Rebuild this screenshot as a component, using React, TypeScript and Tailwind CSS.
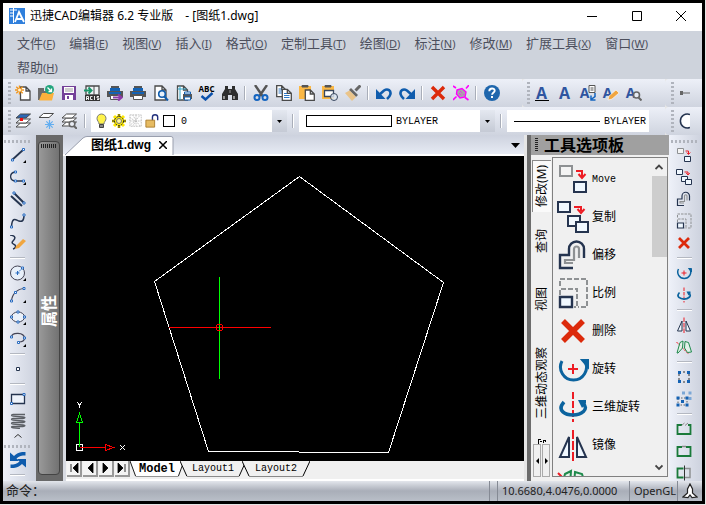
import type { ReactNode } from "react";

const NAVY = "#25344f";
const BLUE = "#0f5cad";

function Svg({ box = 16, className = "size-4", children }: { box?: number; className?: string; children: ReactNode }) {
  return (
    <svg viewBox={`0 0 ${box} ${box}`} className={`block shrink-0 ${className}`} fill="none" aria-hidden="true">
      {children}
    </svg>
  );
}

/* ---------- standard toolbar icons (16 x 16) ---------- */

const Page = ({ x = 0, y = 0, w = 10, h = 13 }: { x?: number; y?: number; w?: number; h?: number }) => (
  <path d={`M${x} ${y}h${w - 4}l4 4v${h - 4}h${-w}zM${x + w - 4} ${y}v4h4`} fill="#fff" stroke="#4a4a4a" strokeWidth="1.3" />
);

const NewIcon = () => (
  <Svg>
    <Page x={5.5} y={2} w={9.5} h={13} />
    <path d="M0 5h9M4.500 .5v9M1.300 1.800l6.400 6.400M7.700 1.800L1.300 8.200" stroke="#f0961e" strokeWidth="1.400" />
    <circle cx="4.500" cy="5" r="1.500" fill="#fff4d8" />
  </Svg>
);
const OpenIcon = () => (
  <Svg>
    <path d="M0 15V3h6v3h5v9z" fill="#6b6b6b" />
    <path d="M1 15.500L4 8h12l-2 7.500z" fill="#fbb13c" />
    <circle cx="11.500" cy="4.500" r="4.500" fill="#22a57e" />
    <path d="M9.500 2.500l4 4M13.500 3.500v3h-3" stroke="#fff" strokeWidth="1.300" />
  </Svg>
);
const SaveIcon = () => (
  <Svg>
    <path d="M1 1h14v14H1z" fill="#744199" />
    <path d="M3 2h10v6H3zM4 10h8v5H4z" fill="#fff" />
    <path d="M4 4h8M4 6h8" stroke="#9d9d9d" />
    <path d="M6 11h2v3H6z" fill="#744199" />
  </Svg>
);
const AcisIcon = () => (
  <Svg>
    <path d="M2 1h13v9H2z" fill="#eef2f4" stroke="#4a4a4a" strokeWidth="1.300" />
    <path d="M10 1v9" stroke="#4a4a4a" />
    <path d="M0 5.500h7M4.500 2.500l3 3-3 3" stroke="#16976a" strokeWidth="2" />
    <path d="M1 10h15v6H1z" fill="#333" />
    <path d="M2.500 15v-3.500h2V15m-2-1.500h2M8.500 11.500h-2v3h2M10.500 11v4M15 11.500h-2v1.500h2v1.500h-2" stroke="#fff" strokeWidth=".9" />
  </Svg>
);
const printer = (
  <>
    <path d="M4 1h8v3H4z" fill="#555" />
    <path d="M3 3h10v3H3z" fill="#1462b4" />
    <path d="M0 6h16v6H0z" fill="#555" />
    <path d="M2 7h12v2H2z" fill="#1462b4" />
    <path d="M3.500 10.500h9v4h-9z" fill="#fff" stroke="#555" />
  </>
);
const PrintExportIcon = () => (
  <Svg>
    {printer}
    <path d="M6 12.500h7M11 9.500l3.500 3-3.500 3" stroke="#8c3aa8" strokeWidth="2.200" />
  </Svg>
);
const PrintIcon = () => <Svg>{printer}</Svg>;
const PreviewIcon = () => (
  <Svg>
    <Page x={2} y={1} w={11} h={14} />
    <circle cx="9" cy="9" r="3.300" fill="#e8f1fb" stroke={BLUE} strokeWidth="1.600" />
    <path d="M11.300 11.500L15 15.500" stroke={BLUE} strokeWidth="2" />
  </Svg>
);
const PageSetupIcon = () => (
  <Svg>
    <Page x={1.5} y={1} w={10} h={14} />
    <path d="M4 1v14M1.500 4h9" stroke="#33a3c7" />
    <path d="M7 9h9v5H7z" fill="#555" />
    <path d="M8.500 7h6v2h-6zM8.500 12h6v3h-6z" fill="#fff" stroke="#1462b4" />
  </Svg>
);
const SpellIcon = () => (
  <span className="flex flex-col items-center">
    <span className="font-['Open_Sans',sans-serif] text-[8px] leading-[7px] font-bold text-black">ABC</span>
    <svg viewBox="0 0 14 9" className="block h-[9px] w-3.5" fill="none" aria-hidden="true">
      <path d="M1.500 4l4 3.500L12.500 1" stroke="#0b51ab" strokeWidth="2.400" />
    </svg>
  </span>
);
const FindIcon = () => (
  <Svg>
    <path d="M3 1h3v3h4V1h3v3l3 5v6h-6v-5H6v5H0V9l3-5z" fill="#2e2e2e" />
    <path d="M2 11v3M12 11v3" stroke="#fff" />
    <path d="M8 5v3" stroke="#999" />
  </Svg>
);
const CutIcon = () => (
  <Svg>
    <path d="M2 0l7.500 11M14 0L6.500 11" stroke="#555" strokeWidth="2.400" />
    <circle cx="4" cy="12.500" r="2.500" stroke="#1565c0" strokeWidth="2" />
    <circle cx="12" cy="12.500" r="2.500" stroke="#1565c0" strokeWidth="2" />
  </Svg>
);
const CopyDocIcon = () => (
  <Svg>
    <Page x={0.7} y={0.7} w={9} h={11} />
    <path d="M2.500 4h3M2.500 6h4M2.500 8h4" stroke="#2d77c4" />
    <Page x={6.3} y={4.3} w={9} h={11} />
    <path d="M8 8.500h3M8 10.500h5.500M8 12.500h5.500" stroke="#2d77c4" />
  </Svg>
);
const PasteIcon = () => (
  <Svg>
    <path d="M0 1h12v13H0z" fill="#fbb845" />
    <path d="M3 2V.500h6V2z" fill="#555" stroke="#555" />
    <Page x={6.3} y={5} w={9} h={10.3} />
  </Svg>
);
const PasteSpecialIcon = () => (
  <Svg>
    <path d="M0 1h12v13H0z" fill="#fbb845" />
    <path d="M3 2V.500h6V2z" fill="#555" stroke="#555" />
    <path d="M2.500 5.500h9v6h-9z" fill="#fff" stroke="#39475e" strokeWidth="1.300" />
    <circle cx="12" cy="12" r="3.500" fill="#dfe8f4" fillOpacity=".8" stroke="#39475e" />
  </Svg>
);
const BrushIcon = () => (
  <Svg>
    <path d="M15.500 .5l-5 5" stroke="#666" strokeWidth="3" />
    <path d="M6 3l7 7-2 2-7-7z" fill="#666" />
    <path d="M4.500 5.500l6.500 6.500-4 4L0 8z" fill="#eac48a" />
  </Svg>
);
const UndoIcon = ({ flip = false }: { flip?: boolean }) => (
  <Svg className={flip ? "size-4 -scale-x-100" : "size-4"}>
    <path d="M3 10l5-4.500c4-2.500 7.300.3 6.300 4-.5 2-1.800 3-3.300 4.500" stroke={BLUE} strokeWidth="2.600" />
    <path d="M0 4v10h9.500z" fill={BLUE} />
  </Svg>
);
const ExplodeIcon = () => (
  <Svg>
    <path d="M4 5l5-1.500 4 3.500-1 5-5 1-3.500-4z" fill="#a8a8a8" stroke="#f0f" strokeWidth="1.400" />
    <path d="M0 1l3 2M16 0l-3 3.500M0 15l3.500-3.500M15.500 15L12 12.500" stroke="#f0f" strokeWidth="1.600" />
    <path d="M7 6l4 4M6 8l3 3" stroke="#f0f" strokeDasharray="1 1" />
  </Svg>
);
const HelpIcon = () => (
  <Svg>
    <circle cx="8" cy="8" r="8" fill="#1f66ac" />
    <path d="M5.300 6.200c0-3.700 5.600-3.500 5.400-.4-.1 1.700-2.500 1.700-2.600 3.900" stroke="#fff" strokeWidth="1.900" />
    <path d="M7 11h2v2H7z" fill="#fff" />
  </Svg>
);

function LetterIcon({ kind }: { kind: "line" | "plain" | "sheet" | "pencil" | "lens" }) {
  const small = kind !== "line" && kind !== "plain";
  return (
    <span className="relative flex size-4 items-center justify-center">
      <span className={`font-['Open_Sans',sans-serif] leading-4 font-bold text-[#2f55a0] ${small ? "pr-1.5 text-[14px]" : "text-[16px]"}`}>A</span>
      <svg viewBox="0 0 16 16" className="absolute inset-0 size-4" fill="none" aria-hidden="true">
        {kind === "line" && <path d="M1 15.500h14" stroke="#000" />}
        {kind === "sheet" && (
          <>
            <path d="M9 .500h6v7H9z" fill="#fff" stroke="#555" />
            <path d="M10.500 3h3M10.500 5h3" stroke="#555" />
            <path d="M15 8v3.500l-4 3M11 10.500V15h4.500" stroke="#1565c0" strokeWidth="1.500" />
          </>
        )}
        {kind === "pencil" && <path d="M5 15l1-4 7-6 3 3-7 6z" fill="#f0a640" stroke="#fff" strokeWidth=".6" />}
        {kind === "lens" && (
          <>
            <circle cx="10.500" cy="10" r="3" fill="#e8ecf4" stroke="#666" strokeWidth="1.600" />
            <path d="M12.500 12.500l3 3" stroke="#666" strokeWidth="2" />
          </>
        )}
      </svg>
    </span>
  );
}

/* ---------- layer toolbar icons ---------- */

const sheet = (y: number, fill = "#fff") => <path d={`M1 ${y + 4}L5.500 ${y}H15.500L11 ${y + 4}z`} fill={fill} stroke="#4a4a4a" />;
const LayersIcon = () => (
  <Svg>
    {sheet(10)}
    {sheet(6)}
    {sheet(1, "#2b67b5")}
    <path d="M5 5h3v3H5z" fill="#e11" />
  </Svg>
);
const LayerFreezeIcon = () => (
  <Svg>
    {sheet(0.5)}
    <path d="M7 11.500h9M11.500 7v9M8.300 8.300l6.400 6.400M14.700 8.300l-6.400 6.400" stroke="#63aef0" strokeWidth="1.200" />
  </Svg>
);
const LayerFindIcon = () => (
  <Svg>
    {sheet(9)}
    {sheet(5)}
    {sheet(1)}
    <circle cx="11" cy="11" r="2.800" fill="#e8ecf4" stroke="#666" strokeWidth="1.500" />
    <path d="M13 13l3 3" stroke="#666" strokeWidth="2" />
  </Svg>
);

/* ---------- drawing toolbar icons ---------- */

const Node = ({ x, y }: { x: number; y: number }) => (
  <path d={`M${x - 1} ${y - 1}h2v2h-2z`} fill="#fff" stroke="#2a6cc0" />
);
const Corner = () => <path d="M16 13v3h-3z" fill="#000" />;

const LineIcon = () => (
  <Svg>
    <path d="M2 13L13 3" stroke={NAVY} strokeWidth="1.800" />
    <Node x={2.500} y={13} />
    <Node x={13.500} y={2.500} />
    <Corner />
  </Svg>
);
const PolylineIcon = () => (
  <Svg>
    <path d="M5 3C-1 4-1 12 6 12h8" stroke={NAVY} strokeWidth="1.300" />
    <Node x={5.500} y={3} />
    <Node x={5.500} y={12} />
    <Node x={13.500} y={12} />
    <Corner />
  </Svg>
);
const ParallelIcon = () => (
  <Svg>
    <path d="M1 5l11 10M4 2l10 10" stroke={NAVY} strokeWidth="2" />
    <Node x={4} y={2} />
    <Node x={14} y={12} />
  </Svg>
);
const SplineIcon = () => (
  <Svg>
    <path d="M1.500 14C2 3 6 7 9 8s5 0 5-6" stroke={NAVY} strokeWidth="1.500" />
    <Node x={1.500} y={14} />
    <Node x={14} y={2} />
  </Svg>
);
const SketchIcon = () => (
  <Svg>
    <path d="M0 0c7 1 5 4 3 6s0 3 2 4c1.500 1.500 0 3.500-2 4" stroke={NAVY} strokeWidth="1.500" />
    <path d="M5 14l1-3 7-7 3 2-7 7z" fill="#f0a640" />
  </Svg>
);
const CircleIcon = () => (
  <Svg>
    <circle cx="7.500" cy="8" r="7" fill="#e8f0fa" stroke="#445" />
    <path d="M7.500 8l5-5" stroke="#2a6cc0" strokeDasharray="2 1" />
    <path d="M5.500 8h4M7.500 6v4" stroke="#2a6cc0" />
    <Node x={12.500} y={3} />
    <Corner />
  </Svg>
);
const ArcIcon = () => (
  <Svg>
    <path d="M1.500 14C2 7 7 2 14 1.500" stroke="#445" strokeWidth="1.200" />
    <Node x={1.500} y={14} />
    <Node x={5.500} y={5.500} />
    <Node x={14} y={1.500} />
    <Corner />
  </Svg>
);
const EllipseIcon = () => (
  <Svg>
    <ellipse cx="8" cy="8" rx="6.500" ry="5" fill="#eaf1fa" stroke="#445" />
    <Node x={1.500} y={8} />
    <Node x={14.500} y={8} />
    <Node x={8} y={3} />
    <Node x={8} y={13} />
    <Corner />
  </Svg>
);
const EllipseArcIcon = () => (
  <Svg>
    <path d="M1.500 6C2 1 14 1 14.500 7c0 3-3 4-6 4" stroke="#445" strokeWidth="1.200" />
    <Node x={1.500} y={6} />
    <Node x={14.500} y={7} />
    <Node x={8.500} y={11.500} />
    <Corner />
  </Svg>
);
const PointIcon = () => (
  <Svg>
    <path d="M6.500 6.500h3v3h-3z" fill="#fff" stroke={NAVY} />
  </Svg>
);
const RectIcon = () => (
  <Svg>
    <path d="M1.500 3.500h13v9h-13z" fill="#eef3fb" stroke={NAVY} strokeWidth="1.300" />
    <Node x={14} y={3.500} />
    <Node x={1.500} y={12.500} />
  </Svg>
);
const CoilIcon = () => (
  <Svg>
    <path
      d="M15 1.500H3c-2 0-2 1.500 0 1.700l10 .8c3 .3 2 1.500 0 1.500H3c-2 0-2 1.500 0 1.700l10 .8c3 .3 2 1.500 0 1.500H3c-2 0-2 1.500 0 1.700l10 .8c3 .3 2 1.500 0 1.500H3c-2 0-2 1.200 0 1.300l7 .7"
      stroke="#5c6066"
      strokeWidth="1.300"
    />
  </Svg>
);
const SyncIcon = () => (
  <Svg>
    <path d="M15.500 0C11-.5 7 1 4 4L0 .500V9h9L6.500 6.500C9 4 12 3.500 15.500 3.500z" fill={BLUE} />
    <path d="M.5 16c4.500.5 8.500-1 11.500-4l4 3.500V7H7l2.500 2.500C7 12 4 12.500.5 12.500z" fill={BLUE} />
  </Svg>
);

/* ---------- modify icons, shared by the palette and the right toolbar (32 x 32) ---------- */

const drawings = {
  move: (
    <>
      <path d="M3 3h12v10H3z" fill="#f4f4f4" stroke="#8e9193" strokeWidth="2" />
      <path d="M19 8h6v6M21.500 11l3.500 4 3.500-4" stroke="#ed1c24" strokeWidth="2" />
      <path d="M17 19h12v10H17z" fill="#f0f8ff" stroke={NAVY} strokeWidth="2" />
    </>
  ),
  copy: (
    <>
      <path d="M1 1h12v10H1z" fill="#f0f8ff" stroke={NAVY} strokeWidth="2" />
      <path d="M17 6h7v4M20.500 8l3.500 4 3.500-4" stroke="#ed1c24" strokeWidth="2" />
      <path d="M11 15h12v10H11z" fill="#f0f8ff" stroke={NAVY} strokeWidth="2" />
      <path d="M19 21h12v10H19z" fill="#f0f8ff" stroke={NAVY} strokeWidth="2" />
    </>
  ),
  offset: (
    <>
      <path d="M16 29H3V16h9v-6a7.500 7.500 0 0 1 15 0v9" stroke={NAVY} strokeWidth="2.400" />
      <path d="M16 24H8v-3h9V10a2.500 2.500 0 0 1 5 0v9" stroke="#8e9193" strokeWidth="2.200" />
    </>
  ),
  scale: (
    <>
      <path d="M3 9V2h27v28h-9" stroke="#8e9193" strokeWidth="2" strokeDasharray="5 2" />
      <path d="M3 18v-6h17v18h-3" stroke="#8e9193" strokeWidth="2" strokeDasharray="5 2" />
      <path d="M3 20h12v10H3z" fill="#f0f8ff" stroke={NAVY} strokeWidth="2.400" />
    </>
  ),
  remove: <path d="M6 6l20 20M26 6L6 26" stroke="#dc2a0b" strokeWidth="5.500" />,
  rotate: (
    <>
      <path d="M5 8a13 13 0 1 0 23 0" stroke="#0b639e" strokeWidth="3" />
      <path d="M25 7h6v7z" fill="#0b639e" stroke="#0b639e" strokeWidth="2" />
      <path d="M11 16h10M16 11v10" stroke="#ed1c24" strokeWidth="2" />
    </>
  ),
  rotate3d: (
    <>
      <path d="M16 1v30" stroke="#ed1c24" strokeWidth="2" strokeDasharray="7 2" />
      <path d="M7 11C-1 20 9 24 16 24s18-5 9-13" stroke="#0b639e" strokeWidth="3.500" />
      <path d="M21 9h8v3l-4 5z" fill="#0b639e" />
    </>
  ),
  mirror: (
    <>
      <path d="M16 1v31" stroke="#ed1c24" strokeWidth="2" strokeDasharray="9 2" />
      <path d="M12 8v20H3zM20 8v20h9z" fill="#f0f8ff" stroke={NAVY} strokeWidth="2" />
    </>
  ),
  mirror3d: (
    <>
      <path d="M1 6l24 24" stroke="#ed1c24" strokeWidth="2" strokeDasharray="5 2" />
      <path d="M8 7l6-3-1 14-9 10H2zM18 5l7 2 6 19-8 1-6-9z" fill="#e6f4ea" fillOpacity=".8" stroke="#1f8a4c" strokeWidth="2" />
    </>
  ),
  array: (
    <>
      <path d="M6 6h20v20H6z" stroke="#333" strokeWidth="2" strokeDasharray="4 4" />
      <path d="M4 4h6v6H4zM22 4h6v6h-6zM4 22h6v6H4zM22 22h6v6h-6z" fill="#1462b4" />
    </>
  ),
  array2: (
    <>
      <path d="M12 1h6v6h-6zM25 1h6v6h-6zM25 12h6v6h-6z" fill="#7ca7d6" />
      <path d="M4 14h18v14H4z" stroke="#333" strokeWidth="1.500" strokeDasharray="3 3" />
      <path d="M1 11h6v6H1zM19 11h6v6h-6zM1 25h6v6H1zM19 25h6v6h-6zM10 18h6v6h-6z" fill="#1462b4" />
    </>
  ),
  breakAt: (
    <>
      <path d="M12 8H3v18h26V8h-5" stroke="#1a7a3a" strokeWidth="3.600" />
      <path d="M11 9l6-5M18 9l6-5" stroke="#888" strokeWidth="2" />
    </>
  ),
  join: (
    <>
      <path d="M12 8H3v18h26V8h-9" stroke="#1a7a3a" strokeWidth="3.600" />
      <path d="M12 7h8" stroke="#888" strokeWidth="3" />
    </>
  ),
  trim: (
    <>
      <path d="M17 7h11v18H17" stroke="#8e9193" strokeWidth="3" />
      <path d="M15 7H3v18h12" stroke="#1a7a3a" strokeWidth="3.600" />
      <path d="M17 1v30" stroke="#333" strokeWidth="2" />
    </>
  ),
};
type Drawing = keyof typeof drawings;

/* ---------- layout pieces ---------- */

function Tool({ name, children }: { name: string; children: ReactNode }) {
  return (
    <button type="button" aria-label={name} className="flex h-7 w-[23px] shrink-0 items-center justify-center">
      {children}
    </button>
  );
}

function SideTool({ name, children }: { name: string; children: ReactNode }) {
  return (
    <button type="button" aria-label={name} className="flex h-[22px] w-full shrink-0 items-center justify-center pr-1">
      {children}
    </button>
  );
}

const Sep = () => (
  <span className="flex w-2 shrink-0 justify-center">
    <span className="h-3.5 w-0.5 border-r border-white bg-[#a9aeb9]" />
  </span>
);
const SideSep = () => (
  <span className="flex h-2 shrink-0 items-center justify-center pr-1">
    <span className="h-0.5 w-[15px] border-b border-white bg-[#b4b8c1]" />
  </span>
);
const Grip = () => (
  <span className="h-[23px] w-[3px] shrink-0 bg-[repeating-linear-gradient(to_bottom,#b0b4bd_0_2px,transparent_2px_4px)]" />
);
const SideGrip = () => (
  <span className="flex h-[9px] shrink-0 items-end px-px pb-px">
    <span className="h-[3px] w-[27px] bg-[repeating-linear-gradient(to_right,#b0b4bd_0_2px,transparent_2px_4px)]" />
  </span>
);

function DropArrow() {
  return (
    <span className="pointer-events-none flex w-[15px] shrink-0 items-center justify-center bg-linear-to-b from-[#e4e8f0] to-[#c5cad5]">
      <svg viewBox="0 0 5 3" className="h-[3px] w-[5px]" aria-hidden="true">
        <path d="M0 0h5L2.500 3z" />
      </svg>
    </span>
  );
}

const barClass = "flex h-7 shrink-0 items-center bg-linear-to-b from-[#edf0f8] to-[#cfd4df]";
const mono = "font-['Liberation_Mono',monospace]";

const menus: [string, string][] = [
  ["文件", "F"], ["编辑", "E"], ["视图", "V"], ["插入", "I"], ["格式", "O"], ["定制工具", "T"],
  ["绘图", "D"], ["标注", "N"], ["修改", "M"], ["扩展工具", "X"], ["窗口", "W"], ["帮助", "H"],
];

const paletteItems: [string, Drawing][] = [
  ["Move", "move"], ["复制", "copy"], ["偏移", "offset"], ["比例", "scale"], ["删除", "remove"],
  ["旋转", "rotate"], ["三维旋转", "rotate3d"], ["镜像", "mirror"],
];

const sideGroups: Drawing[][] = [
  ["move", "copy", "offset", "scale", "remove"],
  ["rotate", "rotate3d"],
  ["mirror", "mirror3d"],
  ["array", "array2"],
  ["breakAt", "join", "trim"],
];

function TitleBar() {
  return (
    <header className="flex h-7 shrink-0 items-center bg-white pb-0.5 pl-1.5">
      <Svg>
        <path d="M0 0h16v16H0z" fill="#2f7fdc" />
        <path d="M1 2h7M4.500 0v15M1 5h3M1 8h3" stroke="#fff" />
        <path d="M6 14l4-10 5 10M8 11h6" stroke="#fff" strokeWidth="1.800" />
      </Svg>
      <h1 className="ml-[5px] flex flex-1 gap-3 text-[12px] whitespace-nowrap text-black">
        <span>迅捷CAD编辑器 6.2 专业版</span>
        <span>- [图纸1.dwg]</span>
      </h1>
      <div className="flex">
        <button type="button" aria-label="最小化" className="flex h-6 w-[45px] items-center justify-center">
          <Svg className="size-2.5" box={10}><path d="M0 5.500h10" stroke="#000" /></Svg>
        </button>
        <button type="button" aria-label="最大化" className="flex h-6 w-[45px] items-center justify-center">
          <Svg className="size-2.5" box={10}><path d="M.5 .5h9v9h-9z" stroke="#000" /></Svg>
        </button>
        <button type="button" aria-label="关闭" className="flex h-6 w-[43px] items-center justify-center">
          <Svg className="size-2.5" box={10}><path d="M0 0l10 10M10 0L0 10" stroke="#000" /></Svg>
        </button>
      </div>
    </header>
  );
}

function MenuBar() {
  return (
    <nav className="flex shrink-0 flex-wrap gap-x-3.5 bg-[#ced3dc] pr-2 pl-3.5">
      {menus.map(([label, key]) => (
        <button key={label} type="button" className="h-6 text-[13px] leading-6 whitespace-nowrap text-[#4c4f5c]">
          {label}
          <span className="text-[11px]">(<u>{key}</u>)</span>
        </button>
      ))}
    </nav>
  );
}

function StandardBar() {
  return (
    <div className="flex shrink-0">
      <div className={`${barClass} flex-1 pl-[5px]`}>
        <Grip />
        <Tool name="新建"><NewIcon /></Tool>
        <Tool name="打开"><OpenIcon /></Tool>
        <Tool name="保存"><SaveIcon /></Tool>
        <Tool name="ACIS"><AcisIcon /></Tool>
        <Tool name="输出"><PrintExportIcon /></Tool>
        <Tool name="打印"><PrintIcon /></Tool>
        <Tool name="预览"><PreviewIcon /></Tool>
        <Tool name="页面设置"><PageSetupIcon /></Tool>
        <Tool name="拼写"><SpellIcon /></Tool>
        <Tool name="查找"><FindIcon /></Tool>
        <Sep />
        <Tool name="剪切"><CutIcon /></Tool>
        <Tool name="复制"><CopyDocIcon /></Tool>
        <Tool name="粘贴"><PasteIcon /></Tool>
        <Tool name="选择性粘贴"><PasteSpecialIcon /></Tool>
        <Tool name="格式刷"><BrushIcon /></Tool>
        <Sep />
        <Tool name="撤销"><UndoIcon /></Tool>
        <Tool name="重做"><UndoIcon flip /></Tool>
        <Sep />
        <Tool name="删除"><Svg><path d="M2 2l12 12M14 2L2 14" stroke="#dc2a0b" strokeWidth="3.400" /></Svg></Tool>
        <Tool name="分解"><ExplodeIcon /></Tool>
        <Sep />
        <Tool name="帮助"><HelpIcon /></Tool>
      </div>
      <div className={`${barClass} w-[143px] rounded-l-sm pl-[5px]`}>
        <Grip />
        <Tool name="文字样式"><LetterIcon kind="line" /></Tool>
        <Tool name="文字"><LetterIcon kind="plain" /></Tool>
        <Tool name="段落"><LetterIcon kind="sheet" /></Tool>
        <Tool name="编辑文字"><LetterIcon kind="pencil" /></Tool>
        <Tool name="查找文字"><LetterIcon kind="lens" /></Tool>
      </div>
      <div className={`${barClass} w-[37px] gap-1.5 rounded-l-sm pl-1.5`}>
        <Grip />
        <svg viewBox="0 0 10 4" className="h-1 w-2.5" aria-hidden="true">
          <path d="M0 0h3v4H0zM3 1.500h7v1H3z" fill="#666" />
        </svg>
      </div>
    </div>
  );
}

function LayerBar() {
  const select = `min-w-0 flex-1 appearance-none bg-transparent text-black ${mono} text-[10px]`;
  return (
    <div className="flex shrink-0">
      <div className={`${barClass} flex-1 pl-[5px]`}>
        <Grip />
        <Tool name="图层"><LayersIcon /></Tool>
        <Tool name="冻结图层"><LayerFreezeIcon /></Tool>
        <Tool name="图层查找"><LayerFindIcon /></Tool>
        <span className="mr-0.5 ml-px"><Sep /></span>
        <div className="flex h-[22px] w-[196px] shrink-0 items-stretch bg-white">
          <div className="flex items-center gap-0.5 pr-1.5 pl-0.5">
            <Svg>
              <path d="M4 5.500a4.500 4.500 0 0 1 9 0c0 2.500-2 3-2 5.500H6C6 8.500 4 8 4 5.500z" fill="#fff34a" stroke="#777" />
              <path d="M6.500 11.500h4v3h-4z" fill="#888" stroke="#444" />
            </Svg>
            <Svg>
              <path d="M8 1v14M1 8h14M3 3l10 10M13 3L3 13" stroke="#ffe800" strokeWidth="3" />
              <path d="M8 1v14M1 8h14" stroke="#222" />
              <circle cx="8" cy="8" r="4.500" fill="#ffef00" stroke="#222" strokeDasharray="2 1" />
              <circle cx="8" cy="8" r="2.500" fill="#fff8a0" stroke="#777" />
            </Svg>
            <Svg className="size-3.5">
              <path d="M1 1h13v13H1zM1 4l6 4-6 5M4 1l4 6 5-6M8 8l-4 6M8 8l5 6M8 1v13M1 8h13" stroke="#bbb" strokeDasharray="2 1" />
            </Svg>
            <Svg className="size-3.5">
              <path d="M8.500 8V3.500c0-3.500 6-3.500 6 0V7" stroke="#22307c" strokeWidth="1.600" />
              <path d="M1 7h10v8H1z" fill="#e6bb62" stroke="#a87a2c" />
            </Svg>
            <span className="ml-0.5 size-3 border border-black bg-white" />
          </div>
          <select aria-label="当前图层" className={select}>
            <option>0</option>
          </select>
          <DropArrow />
        </div>
        <span className="ml-0.5"><Sep /></span>
        <div className="ml-0.5 flex h-[22px] w-[196px] shrink-0 items-stretch bg-white pl-[7px]">
          <span className="mr-1 h-3 w-[86px] self-center border border-black" />
          <select aria-label="颜色" className={select}>
            <option>BYLAYER</option>
          </select>
          <DropArrow />
        </div>
        <span className="ml-0.5"><Sep /></span>
        <div className="ml-0.5 flex h-[22px] w-[142px] shrink-0 items-stretch bg-white pl-[7px]">
          <span className="mr-1 h-px w-[86px] self-center bg-black" />
          <select aria-label="线型" className={select}>
            <option>BYLAYER</option>
          </select>
        </div>
      </div>
      <div className={`${barClass} w-[37px] gap-1 rounded-l-sm pl-1.5`}>
        <Grip />
        <svg viewBox="0 0 12 16" className="h-4 w-3" aria-hidden="true">
          <path d="M12 1.500a7 7 0 1 0 0 13" fill="#fff" stroke={NAVY} strokeWidth="1.500" />
        </svg>
      </div>
    </div>
  );
}

function DrawBar() {
  return (
    <aside className="flex w-[33px] shrink-0 flex-col overflow-hidden bg-linear-to-r from-[#eef1f9] to-[#cdd2de]">
      <SideGrip />
      <SideTool name="直线"><LineIcon /></SideTool>
      <SideTool name="多段线"><PolylineIcon /></SideTool>
      <SideTool name="多线"><ParallelIcon /></SideTool>
      <SideTool name="样条曲线"><SplineIcon /></SideTool>
      <SideTool name="徒手画"><SketchIcon /></SideTool>
      <SideSep />
      <SideTool name="圆"><CircleIcon /></SideTool>
      <SideTool name="圆弧"><ArcIcon /></SideTool>
      <SideTool name="椭圆"><EllipseIcon /></SideTool>
      <SideTool name="椭圆弧"><EllipseArcIcon /></SideTool>
      <SideSep />
      <SideTool name="点"><PointIcon /></SideTool>
      <SideSep />
      <SideTool name="矩形"><RectIcon /></SideTool>
      <SideTool name="螺旋"><CoilIcon /></SideTool>
      <button type="button" aria-label="更多" className="flex h-2 shrink-0 items-center justify-center pr-1">
        <svg viewBox="0 0 8 4" className="h-1 w-2" fill="none" aria-hidden="true"><path d="M.5 3.500L4 .500l3.500 3" stroke="#333" /></svg>
      </button>
      <SideGrip />
      <SideTool name="刷新"><SyncIcon /></SideTool>
      <SideSep />
    </aside>
  );
}

function PropertiesStrip() {
  return (
    <aside className="flex w-[27px] shrink-0 bg-[#696969] pt-1.5 pr-[3px] pb-1.5 pl-0.5">
      <div className="flex flex-1 flex-col items-center rounded-sm border border-[#444] bg-linear-to-r from-[#999] to-[#727272]">
        <span className="mt-0.5 h-1 w-4 bg-[repeating-linear-gradient(to_right,#222_0_1px,transparent_1px_2px)]" />
        <div className="flex flex-1 items-center">
          <h2 className="rotate-180 text-[16px] leading-5 font-bold text-white [text-orientation:sideways] [writing-mode:vertical-rl]">属性</h2>
        </div>
      </div>
    </aside>
  );
}

function Canvas() {
  return (
    <div className="min-h-0 flex-1 overflow-hidden bg-black">
      <svg viewBox="0 0 458 305" className="block h-full w-full" preserveAspectRatio="xMinYMin" fill="none" shapeRendering="crispEdges" role="img" aria-label="五边形">
        <path d="M233.500 20.500L377.500 126.500 322.500 296.500 142.500 295.500 88.500 125.500z" stroke="#fff" />
        <path d="M103 171.500h102" stroke="#f00" />
        <path d="M153.500 121v102" stroke="#0f0" />
        <path d="M151 168.500h5M151 174.500h5M150.500 169v5M156.500 169v5" stroke="#f00" />
        <path d="M10.500 288.500h6v6h-6z" stroke="#fff" />
        <path d="M13.500 291V266M10.500 266.500h6l-3-9z" stroke="#0f0" />
        <path d="M14 291.500h26M39.500 288.500v6l8-3z" stroke="#f00" />
        <path d="M11 246l2.500 3v3M16 246l-2.500 3M54 289l5 5M59 289l-5 5" stroke="#fff" />
      </svg>
    </div>
  );
}

function SheetTab({ label, active = false, className }: { label: string; active?: boolean; className: string }) {
  return (
    <button
      type="button"
      className={`relative h-4 shrink-0 text-center leading-4 text-black ${mono} ${active ? "text-[12px] font-bold" : "text-[10px]"} ${className}`}
    >
      <svg viewBox="0 0 68 16" preserveAspectRatio="none" className="absolute inset-0 h-full w-full" fill="none" aria-hidden="true">
        <path d="M0 0l7 15h54l7-15z" fill={active ? "#fff" : "#f0f0f0"} />
        <path d="M7 15.500h54" stroke="#888" />
        <path d="M0 0l7 15M61 15l7-15" stroke="#000" />
      </svg>
      <span className="relative">{label}</span>
    </button>
  );
}

function Drawing() {
  const nav: [string, string][] = [
    ["第一个", "M2 1v8M9 0v10L4 5z"],
    ["上一个", "M8 0v10L3 5z"],
    ["下一个", "M2 0v10l5-5z"],
    ["最后一个", "M8 1v8M1 0v10l5-5z"],
  ];
  return (
    <main className="flex min-w-0 flex-1 flex-col">
      <div className="flex h-[21px] shrink-0 items-end bg-linear-to-b from-[#cdd2de] to-[#e9edf6]">
        <div className="relative flex h-5 flex-1 items-center border-b-2 border-white">
          <svg viewBox="0 0 111 20" className="absolute top-0 left-0 h-5 w-[111px]" fill="none" aria-hidden="true">
            <path d="M2 19L20 2q2-1.500 4-1.500h84q2 0 2 2V20H2z" fill="#fff" stroke="#9a9fae" />
            <path d="M0 20h111" stroke="#fff" strokeWidth="2" />
          </svg>
          <span className="relative ml-7 font-['Liberation_Sans','Noto_Sans_CJK_SC',sans-serif] text-[13px] leading-4 font-bold text-black">
            图纸<span className="text-[12px]">1.dwg</span>
          </span>
          <button type="button" aria-label="关闭图纸" className="relative ml-2">
            <Svg box={8} className="size-2"><path d="M0 0l8 8M8 0L0 8" stroke="#000" strokeWidth="1.500" /></Svg>
          </button>
          <button type="button" aria-label="图纸列表" className="mr-1 ml-auto">
            <svg viewBox="0 0 9 5" className="h-[5px] w-[9px]" aria-hidden="true"><path d="M0 0h9L4.500 5z" /></svg>
          </button>
        </div>
      </div>
      <div className="flex min-h-0 flex-1 flex-col border-l-3 border-[#d8dbe2]">
        <Canvas />
        <div className="flex h-[18px] shrink-0 bg-[#f0f0f0] pl-px">
          <div className="flex gap-px">
            {nav.map(([name, d]) => (
              <button key={name} type="button" aria-label={name} className="flex h-4 w-[15px] items-center justify-center border-r-2 border-b-2 border-[#999] bg-[#f4f4f4]">
                <svg viewBox="0 0 10 10" className="size-2.5" aria-hidden="true"><path d={d} stroke="#000" strokeWidth=".8" /></svg>
              </button>
            ))}
          </div>
          <div className="flex">
            <SheetTab label="Model" active className="w-[54px]" />
            <SheetTab label="Layout1" className="-ml-1 w-[66px]" />
            <SheetTab label="Layout2" className="-ml-1 w-[68px]" />
          </div>
        </div>
        <div className="h-0.5 shrink-0 bg-white" />
      </div>
    </main>
  );
}

function Palette() {
  const sideText = "rotate-180 text-[12px] leading-[18px] text-black [text-orientation:sideways] [writing-mode:vertical-rl]";
  return (
    <section className="ml-[3px] flex w-[142px] shrink-0 flex-col border-l-4 border-[#6c6c6c] bg-[#f0f0f0]">
      <header className="flex h-5 shrink-0 items-center gap-1.5 bg-[#a0a0a0] pl-1">
        <span className="h-3.5 w-[3px] bg-[repeating-linear-gradient(to_bottom,#222_0_1px,transparent_1px_2px)]" />
        <h2 className="text-[16px] leading-5 font-bold whitespace-nowrap text-black">工具选项板</h2>
      </header>
      <div className="flex min-h-0 flex-1 pt-0.5 pb-1">
        <div className="flex w-[21px] shrink-0 flex-col items-center overflow-hidden pt-[3px]">
          <button type="button" className="flex h-[52px] w-[19px] shrink-0 items-center justify-center border-t border-l border-[#888] bg-[#fafafa]">
            <span className={sideText}>修改(M)</span>
          </button>
          <button type="button" className="flex h-[58px] shrink-0 items-center"><span className={sideText}>查询</span></button>
          <button type="button" className="flex h-[58px] shrink-0 items-center"><span className={sideText}>视图</span></button>
          <button type="button" className="flex h-[110px] shrink-0 items-center"><span className={sideText}>三维动态观察</span></button>
          {/* the next tab only peeks out above the scroll buttons */}
          <button type="button" aria-label="下一组" className="flex min-h-0 w-full flex-1 items-end justify-center overflow-hidden">
            <svg viewBox="0 0 10 5" className="h-[5px] w-2.5" fill="none" shapeRendering="crispEdges" aria-hidden="true">
              <path d="M1.500 0v5M1 .5h3M3 2.500h2M6.500 1v3M6 1.500h3M8.500 1v2" stroke="#000" />
            </svg>
          </button>
          <div className="flex shrink-0 gap-px">
            {["M4 0v6L1 3z", "M1 0v6l3-3z"].map((d, i) => (
              <button key={d} type="button" aria-label={i ? "下移" : "上移"} className="flex h-[33px] w-2 items-center justify-center border border-[#aaa]">
                <svg viewBox="0 0 5 6" className="h-1.5 w-[5px]" aria-hidden="true"><path d={d} /></svg>
              </button>
            ))}
          </div>
        </div>
        <div className="mr-px flex min-w-0 flex-1 overflow-hidden border border-[#808080]">
          <ul className="flex min-w-0 flex-1 flex-col overflow-hidden pt-0.5 pl-1">
            {paletteItems.map(([label, icon]) => (
              <li key={label} className="shrink-0">
                <button type="button" className="flex h-[38px] items-center gap-[3px] text-[12px] whitespace-nowrap text-black">
                  <Svg box={32} className="size-8">{drawings[icon]}</Svg>
                  <span className={label === "Move" ? `${mono} text-[10px]` : ""}>{label}</span>
                </button>
              </li>
            ))}
            <li className="shrink-0">
              <button type="button" aria-label="三维镜像" className="flex h-[38px] items-center">
                <Svg box={32} className="size-8">{drawings.mirror3d}</Svg>
              </button>
            </li>
          </ul>
          <div className="flex w-4 shrink-0 flex-col items-center">
            <span className="flex h-[18px] shrink-0 items-center"><Svg box={8} className="size-2"><path d="M.5 6L4 2.500 7.500 6" stroke="#444" strokeWidth="1.800" /></Svg></span>
            <span className="h-[81px] w-[15px] shrink-0 bg-[#cdcdcd]" />
            <span className="mt-auto flex h-[18px] shrink-0 items-center"><Svg box={8} className="size-2"><path d="M.5 2.500L4 6l3.500-3.500" stroke="#444" strokeWidth="1.800" /></Svg></span>
          </div>
        </div>
      </div>
    </section>
  );
}

function ModifyBar() {
  return (
    <aside className="flex w-[33px] shrink-0 flex-col overflow-hidden bg-linear-to-r from-[#eef1f9] to-[#cdd2de] pl-px">
      <SideGrip />
      {sideGroups.map((group, i) => (
        <div key={group[0]} className="flex shrink-0 flex-col">
          {i > 0 && <SideSep />}
          {group.map((icon) => (
            <SideTool key={icon} name={icon}>
              <Svg box={32}>{drawings[icon]}</Svg>
            </SideTool>
          ))}
        </div>
      ))}
    </aside>
  );
}

function StatusBar() {
  const cell = "flex h-full shrink-0 items-center border-l border-[#858a94] pl-1";
  return (
    <footer className="flex h-5 shrink-0 items-center bg-linear-to-b from-[#e3e6ec] via-[#a9aeb8] to-[#b9bfc8] text-[11px] whitespace-nowrap text-[#222]">
      <span className="flex-1 pl-[3px] text-[13px]">命令：</span>
      <span className={`${cell} w-2`} />
      <span className={`${cell} w-[132px]`}>10.6680,4.0476,0.0000</span>
      <span className={`${cell} w-[48px]`}>OpenGL</span>
      <span className={`${cell} w-[25px]`}>
        <Svg>
          <path d="M8 1l2.500 5v4l4.500 4-5 .5L8 12l-2 2.500L1 14l4.500-4V6z" fill="#fff" stroke="#222" strokeWidth="1.200" />
        </Svg>
      </span>
    </footer>
  );
}

export default function App() {
  return (
    <div className="flex h-screen bg-[#e6e6e6] pr-px pb-px font-['Noto_Sans','Noto_Sans_CJK_SC',sans-serif]">
      <div className="flex min-w-0 flex-1 flex-col overflow-hidden border-3 border-black">
        <TitleBar />
        <MenuBar />
        <StandardBar />
        <LayerBar />
        <div className="flex min-h-0 flex-1">
          <DrawBar />
          <PropertiesStrip />
          <Drawing />
          <Palette />
          <ModifyBar />
        </div>
        <StatusBar />
      </div>
    </div>
  );
}
